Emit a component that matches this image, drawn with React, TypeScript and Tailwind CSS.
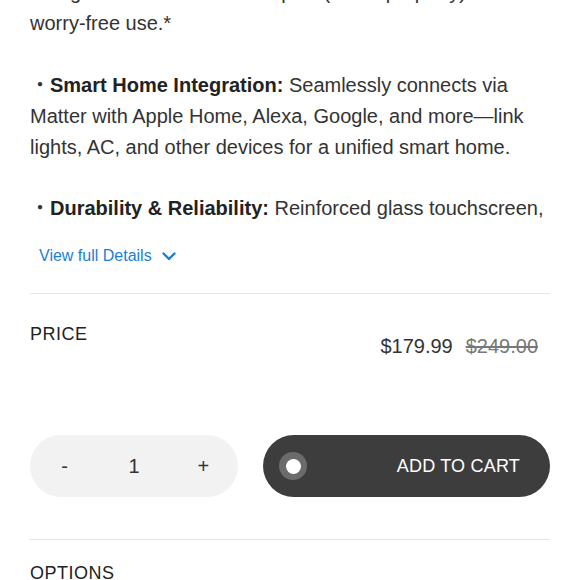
export default function App() {
  return (
    <div className="h-[580px] overflow-hidden bg-white px-[30px] font-['Liberation_Sans',Arial,'Noto_Sans_CJK_JP',sans-serif] text-[#333]">
      {/* description, clipped */}
      <div className="-mt-[23px] h-[247px] overflow-hidden text-[20px] leading-[31px]">
        <p>Designed for the best home plus (and a property) for worry-free use.*</p>
        <p className="mt-[31px]">
          <span>・</span>
          <strong className="font-bold text-[#222]">Smart Home Integration:</strong> Seamlessly connects via
          Matter with Apple Home, Alexa, Google, and more—link lights, AC, and other devices for a unified smart
          home.
        </p>
        <p className="mt-[30px]">
          <span>・</span>
          <strong className="font-bold text-[#222]">Durability &amp; Reliability:</strong> Reinforced glass
          touchscreen, built to handle everyday wear and tear for years of dependable use.
        </p>
      </div>

      <button className="mt-[20px] flex h-6 items-center gap-[10px] pl-[9px] text-[16px] text-[#1b7fd4]">
        View full Details
        <svg width="14" height="9" viewBox="0 0 14 9" fill="none">
          <polyline points="1.5,1.5 7,7 12.5,1.5" stroke="#1b7fd4" strokeWidth="2.4" strokeLinecap="round" strokeLinejoin="round" />
        </svg>
      </button>

      <div className="mt-[25px] border-t border-[#e6e6e6]">
        <div className="flex justify-between pt-[28px] pr-[12px]">
          <div className="text-[18px] leading-6 tracking-[0.5px] text-[#222]">PRICE</div>
          <div className="mt-3 flex gap-[13px] text-[20px] leading-6 text-[#333]">
            <span>$179.99</span>
            <s className="text-[#777]">$249.00</s>
          </div>
        </div>

        <div className="mt-[77px] flex gap-[25px]">
          <div className="grid h-[62px] w-[208px] grid-cols-3 items-center rounded-full bg-[#f2f2f2] text-center text-[20px] text-[#333]">
            <button>-</button>
            <span>1</span>
            <button>+</button>
          </div>
          <button className="flex h-[62px] flex-1 items-center justify-between rounded-full bg-[#3d3d3d] pl-[16px] pr-[30px]">
            <span className="flex h-[28px] w-[28px] items-center justify-center rounded-full bg-[#6b6b6b]">
              <span className="h-[15px] w-[15px] rounded-full bg-white" />
            </span>
            <span className="text-[18px] tracking-[0.2px] text-white">ADD TO CART</span>
          </button>
        </div>
      </div>

      <div className="mt-[42px] border-t border-[#e6e6e6] pt-[21px]">
        <div className="text-[18px] leading-6 tracking-[0.5px] text-[#222]">OPTIONS</div>
      </div>
    </div>
  );
}
